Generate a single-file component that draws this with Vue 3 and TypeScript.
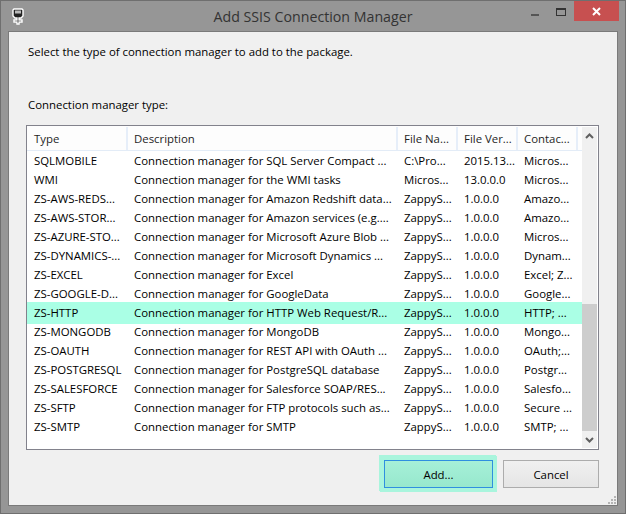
<script setup lang="ts">
interface Row {
  type: string
  desc: string
  file: string
  ver: string
  contact: string
  selected?: boolean
}

const rows: Row[] = [
  { type: 'SQLMOBILE', desc: 'Connection manager for SQL Server Compact ...', file: 'C:\\Pro...', ver: '2015.13...', contact: 'Micros...' },
  { type: 'WMI', desc: 'Connection manager for the WMI tasks', file: 'Micros...', ver: '13.0.0.0', contact: 'Micros...' },
  { type: 'ZS-AWS-REDS...', desc: 'Connection manager for Amazon Redshift data...', file: 'ZappyS...', ver: '1.0.0.0', contact: 'Amazo...' },
  { type: 'ZS-AWS-STOR...', desc: 'Connection manager for Amazon services (e.g....', file: 'ZappyS...', ver: '1.0.0.0', contact: 'Amazo...' },
  { type: 'ZS-AZURE-STO...', desc: 'Connection manager for Microsoft Azure Blob ...', file: 'ZappyS...', ver: '1.0.0.0', contact: 'Micros...' },
  { type: 'ZS-DYNAMICS-...', desc: 'Connection manager for Microsoft Dynamics ...', file: 'ZappyS...', ver: '1.0.0.0', contact: 'Dynam...' },
  { type: 'ZS-EXCEL', desc: 'Connection manager for Excel', file: 'ZappyS...', ver: '1.0.0.0', contact: 'Excel; Z...' },
  { type: 'ZS-GOOGLE-D...', desc: 'Connection manager for GoogleData', file: 'ZappyS...', ver: '1.0.0.0', contact: 'Google...' },
  { type: 'ZS-HTTP', desc: 'Connection manager for HTTP Web Request/R...', file: 'ZappyS...', ver: '1.0.0.0', contact: 'HTTP; ...', selected: true },
  { type: 'ZS-MONGODB', desc: 'Connection manager for MongoDB', file: 'ZappyS...', ver: '1.0.0.0', contact: 'Mongo...' },
  { type: 'ZS-OAUTH', desc: 'Connection manager for REST API with OAuth ...', file: 'ZappyS...', ver: '1.0.0.0', contact: 'OAuth;...' },
  { type: 'ZS-POSTGRESQL', desc: 'Connection manager for PostgreSQL database', file: 'ZappyS...', ver: '1.0.0.0', contact: 'Postgr...' },
  { type: 'ZS-SALESFORCE', desc: 'Connection manager for Salesforce SOAP/RES...', file: 'ZappyS...', ver: '1.0.0.0', contact: 'Salesfo...' },
  { type: 'ZS-SFTP', desc: 'Connection manager for FTP protocols such as...', file: 'ZappyS...', ver: '1.0.0.0', contact: 'Secure ...' },
  { type: 'ZS-SMTP', desc: 'Connection manager for SMTP', file: 'ZappyS...', ver: '1.0.0.0', contact: 'SMTP; ...' },
]

const headers = ['Type', 'Description', 'File Na...', 'File Ver...', 'Contac...']
</script>

<template>
  <div class="window">
    <header class="titlebar">
      <svg class="app-icon" width="12" height="17" viewBox="0 0 12 17">
        <path d="M2 1h8l1 1v6l-2 2H7v2h3v2H7v2H5v-2H2v-2h3v-2H3L1 8V2z" fill="#222" stroke="#fff" stroke-width="1.4" />
        <rect x="3" y="2.5" width="6" height="3" fill="#bbb" />
      </svg>
      <h1 class="title">Add SSIS Connection Manager</h1>
      <div class="controls">
        <span class="ctl min"></span>
        <span class="ctl max"></span>
        <span class="close">
          <svg width="11" height="9" viewBox="0 0 11 9">
            <path d="M2 1l7 7M9 1L2 8" stroke="#fff" stroke-width="2" fill="none" />
          </svg>
        </span>
      </div>
    </header>

    <main class="client">
      <p class="intro">Select the type of connection manager to add to the package.</p>
      <label class="label">Connection manager type:</label>

      <section class="list">
        <div class="table">
          <div class="row head">
            <span v-for="h in headers" :key="h" class="cell hcell">{{ h }}</span>
          </div>
          <div class="body">
            <div v-for="r in rows" :key="r.type" class="row" :class="{ selected: r.selected }">
              <span class="cell">{{ r.type }}</span>
              <span class="cell">{{ r.desc }}</span>
              <span class="cell">{{ r.file }}</span>
              <span class="cell">{{ r.ver }}</span>
              <span class="cell">{{ r.contact }}</span>
            </div>
          </div>
        </div>
        <div class="scrollbar">
          <svg class="arrow up" width="9" height="7" viewBox="0 0 9 7">
            <path d="M1 5l3.5-3.5L8 5" stroke="#606060" stroke-width="2" fill="none" />
          </svg>
          <div class="track"><div class="thumb"></div></div>
          <svg class="arrow down" width="9" height="7" viewBox="0 0 9 7">
            <path d="M1 2l3.5 3.5L8 2" stroke="#606060" stroke-width="2" fill="none" />
          </svg>
        </div>
      </section>

      <footer class="actions">
        <button class="btn add" type="button">Add...</button>
        <button class="btn cancel" type="button">Cancel</button>
      </footer>

      <svg class="grip" width="9" height="9" viewBox="0 0 9 9">
        <g fill="#b4b4b4">
          <rect x="6" y="0" width="2" height="2" />
          <rect x="3" y="3" width="2" height="2" />
          <rect x="6" y="3" width="2" height="2" />
          <rect x="0" y="6" width="2" height="2" />
          <rect x="3" y="6" width="2" height="2" />
          <rect x="6" y="6" width="2" height="2" />
        </g>
      </svg>
    </main>
  </div>
</template>

<style>
html, body { margin: 0; padding: 0; }
</style>

<style scoped>
.window {
  width: 626px;
  height: 514px;
  box-sizing: border-box;
  background: #969696;
  border: 1px solid #6f6f6f;
  display: flex;
  flex-direction: column;
  font-family: "Open Sans", "Noto Sans", sans-serif;
  font-size: 11.4px;
  color: #000;
  overflow: hidden;
}
.titlebar {
  height: 30px;
  flex: none;
  position: relative;
  display: flex;
  justify-content: center;
  align-items: center;
}
.app-icon {
  position: absolute;
  left: 11px;
  top: 7px;
}
.title {
  margin: 0;
  font-size: 14.2px;
  font-weight: 400;
  color: #333;
}
.controls {
  position: absolute;
  right: 6px;
  top: 0;
  display: flex;
  align-items: flex-start;
}
.ctl {
  box-sizing: border-box;
  display: block;
}
.min {
  width: 8px;
  height: 2px;
  background: #555;
  margin: 13px 17px 0 0;
}
.max {
  width: 10px;
  height: 8px;
  border: 1px solid #333;
  border-top-width: 2px;
  margin: 7px 8px 0 0;
}
.close {
  width: 45px;
  height: 20px;
  background: #c75050;
  display: flex;
  align-items: center;
  justify-content: center;
}
.client {
  flex: 1;
  margin: 0 7px 7px;
  box-sizing: border-box;
  background: #f0f0f0;
  border: 1px solid #7a7a7a;
  position: relative;
  display: flex;
  flex-direction: column;
  padding: 0 18px 0 17px;
}
.intro {
  margin: 11px 0 0 2px;
  line-height: 18px;
}
.label {
  margin: 35px 0 0 2px;
  line-height: 18px;
  display: block;
}
.list {
  margin-top: 11px;
  height: 325px;
  box-sizing: border-box;
  border: 1px solid #82828c;
  background: #fff;
  display: flex;
  flex: none;
}
.table {
  width: 555px;
  flex: none;
}
.row {
  display: grid;
  grid-template-columns: 100px 270px 60px 60px 60px;
  height: 19px;
  line-height: 19px;
  white-space: nowrap;
}
.cell {
  padding-left: 7px;
  overflow: hidden;
}
.head {
  height: 24px;
  color: #1f1f1f;
  background: #fdfdfd;
  border-bottom: 1px solid #e3ecf7;
}
.hcell {
  border-right: 2px solid #e6eef9;
  box-sizing: border-box;
  margin: 1px -1px 0 0;
  height: 23px;
  line-height: 24px;
}
.selected {
  height: 22px;
  line-height: 22px;
  margin: -1px 0 -2px;
  background: #aaffe5;
  position: relative;
}
.scrollbar {
  width: 15px;
  margin: 1px 0 1px 0;
  background: #f0f0f0;
  display: flex;
  flex-direction: column;
  align-items: center;
}
.arrow {
  flex: none;
}
.arrow.up {
  margin: 6px 0;
}
.arrow.down {
  margin: 5px 0;
}
.track {
  flex: 1;
  width: 100%;
  position: relative;
}
.thumb {
  position: absolute;
  left: 0;
  right: 0;
  bottom: 0;
  height: 127px;
  background: #cdcdcd;
}
.actions {
  display: flex;
  justify-content: flex-end;
  gap: 10px;
  margin-top: 10px;
}
.btn {
  height: 28px;
  box-sizing: border-box;
  font: inherit;
  color: #000;
  padding: 0;
}
.add {
  width: 109px;
  border: 1px solid #2f8fe0;
  background: linear-gradient(#a6f0d8, #97e8cd);
  box-shadow: 0 0 0 4px #a9f5dd, -1px -1px 0 4px #a9f5dd;
}
.cancel {
  width: 96px;
  border: 1px solid #acacac;
  background: linear-gradient(#f0f0f0, #e5e5e5);
}
.grip {
  position: absolute;
  right: 0;
  bottom: 0;
}
</style>
